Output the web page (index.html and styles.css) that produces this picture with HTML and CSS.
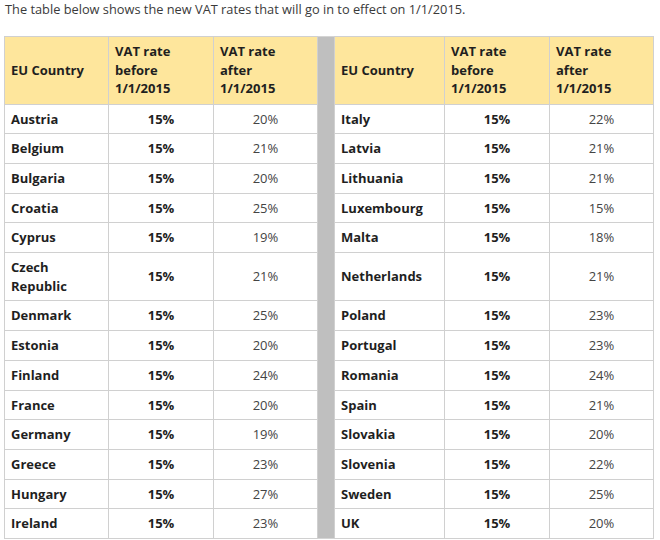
FILE: index.html
```html
<!DOCTYPE html>
<html>
<head>
<meta charset="utf-8">
<link rel="stylesheet" href="styles.css">
</head>
<body>
<p class="intro">The table below shows the new VAT rates that will go in to effect on 1/1/2015.</p>
<table class="vat">
  <colgroup>
    <col class="c-country"><col class="c-rate"><col class="c-rate2"><col class="c-sep"><col class="c-country2"><col class="c-rate"><col class="c-rate2">
  </colgroup>
  <tbody>
    <tr class="head">
      <th>EU Country</th><th>VAT rate before 1/1/2015</th><th>VAT rate after 1/1/2015</th>
      <td class="sep" rowspan="15"></td>
      <th>EU Country</th><th>VAT rate before 1/1/2015</th><th>VAT rate after 1/1/2015</th>
    </tr>
    <tr><td class="name">Austria</td><td class="before">15%</td><td class="after">20%</td><td class="name">Italy</td><td class="before">15%</td><td class="after">22%</td></tr>
    <tr><td class="name">Belgium</td><td class="before">15%</td><td class="after">21%</td><td class="name">Latvia</td><td class="before">15%</td><td class="after">21%</td></tr>
    <tr><td class="name">Bulgaria</td><td class="before">15%</td><td class="after">20%</td><td class="name">Lithuania</td><td class="before">15%</td><td class="after">21%</td></tr>
    <tr><td class="name">Croatia</td><td class="before">15%</td><td class="after">25%</td><td class="name">Luxembourg</td><td class="before">15%</td><td class="after">15%</td></tr>
    <tr><td class="name">Cyprus</td><td class="before">15%</td><td class="after">19%</td><td class="name">Malta</td><td class="before">15%</td><td class="after">18%</td></tr>
    <tr><td class="name">Czech Republic</td><td class="before">15%</td><td class="after">21%</td><td class="name">Netherlands</td><td class="before">15%</td><td class="after">21%</td></tr>
    <tr><td class="name">Denmark</td><td class="before">15%</td><td class="after">25%</td><td class="name">Poland</td><td class="before">15%</td><td class="after">23%</td></tr>
    <tr><td class="name">Estonia</td><td class="before">15%</td><td class="after">20%</td><td class="name">Portugal</td><td class="before">15%</td><td class="after">23%</td></tr>
    <tr><td class="name">Finland</td><td class="before">15%</td><td class="after">24%</td><td class="name">Romania</td><td class="before">15%</td><td class="after">24%</td></tr>
    <tr><td class="name">France</td><td class="before">15%</td><td class="after">20%</td><td class="name">Spain</td><td class="before">15%</td><td class="after">21%</td></tr>
    <tr><td class="name">Germany</td><td class="before">15%</td><td class="after">19%</td><td class="name">Slovakia</td><td class="before">15%</td><td class="after">20%</td></tr>
    <tr><td class="name">Greece</td><td class="before">15%</td><td class="after">23%</td><td class="name">Slovenia</td><td class="before">15%</td><td class="after">22%</td></tr>
    <tr><td class="name">Hungary</td><td class="before">15%</td><td class="after">27%</td><td class="name">Sweden</td><td class="before">15%</td><td class="after">25%</td></tr>
    <tr><td class="name">Ireland</td><td class="before">15%</td><td class="after">23%</td><td class="name">UK</td><td class="before">15%</td><td class="after">20%</td></tr>
  </tbody>
</table>
</body>
</html>
```
FILE: styles.css
```css
html, body {
  margin: 0;
  background: #ffffff;
}
body {
  padding: 0 4px;
  font-family: "Open Sans", "Noto Sans", sans-serif;
  font-size: 13px;
  color: #333333;
}
.intro {
  margin: 0 0 18px 1px;
  line-height: 18px;
  font-size: 12.8px;
  color: #3a3a3a;
}
.vat {
  border-collapse: collapse;
  table-layout: fixed;
  width: 650px;
  border: 1px solid #d4d4d4;
}
.c-country { width: 104px; }
.c-rate { width: 105px; }
.c-rate2 { width: 104px; }
.c-sep { width: 17px; }
.c-country2 { width: 110px; }
.vat th {
  background: #fee69c;
  text-align: left;
  font-weight: 700;
  color: #1f1f1f;
  padding: 5px 12px 6px 6px;
  line-height: 18.5px;
  border: 1px solid #d0d0d0;
}
.vat td {
  border: 1px solid #d0d0d0;
  padding: 5px 6px;
  line-height: 18.7px;
}
.vat td.sep {
  background: #bfbfbf;
  padding: 0;
  border: none;
}
.vat td.name {
  font-weight: 700;
  color: #1f1f1f;
}
.vat td.before {
  font-weight: 700;
  text-align: center;
  color: #1f1f1f;
}
.vat td.after {
  text-align: center;
  color: #444444;
}
```
